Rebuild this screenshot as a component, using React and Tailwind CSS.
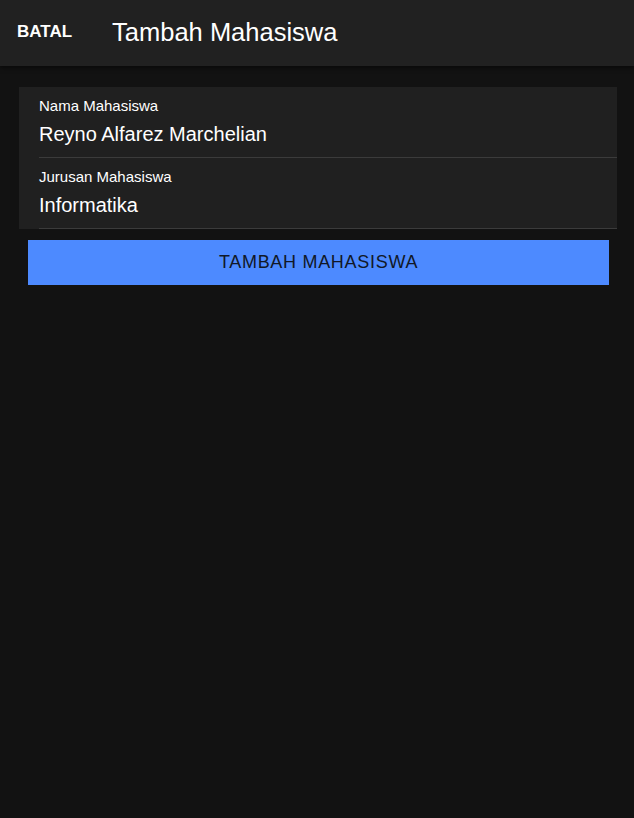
export default function App() {
  return (
    <div className="min-h-[818px] bg-[#121212] font-['Liberation_Sans',Arial,sans-serif] text-white">
      {/* Header */}
      <header className="flex items-center h-[66px] bg-[#212121] shadow-[0_2px_4px_rgba(0,0,0,0.5)]">
        <button className="ml-[17px] mb-[3px] text-[17px] font-bold text-white">BATAL</button>
        <h1 className="ml-[40px] text-[25.5px] leading-none text-white">Tambah Mahasiswa</h1>
      </header>

      {/* Form card */}
      <div className="mt-[21px] ml-[19px] mr-[17px] bg-[#202020] pl-[20px]">
        <div className="pt-[10px] pb-[9px] border-b border-[#3b3b3b]">
          <div className="text-[15px] leading-[18px]">Nama Mahasiswa</div>
          <div className="mt-[5px] text-[20px] leading-[28px]">Reyno Alfarez Marchelian</div>
        </div>
        <div className="pt-[10px] pb-[9px] border-b border-[#3b3b3b]">
          <div className="text-[15px] leading-[18px]">Jurusan Mahasiswa</div>
          <div className="mt-[5px] text-[20px] leading-[28px]">Informatika</div>
        </div>
      </div>

      <div className="mt-[11px] ml-[28px] mr-[25px]">
        <button className="w-full h-[45px] bg-[#4d8aff] text-[#111827] text-[18px] tracking-[0.7px]">
          TAMBAH MAHASISWA
        </button>
      </div>
    </div>
  );
}
